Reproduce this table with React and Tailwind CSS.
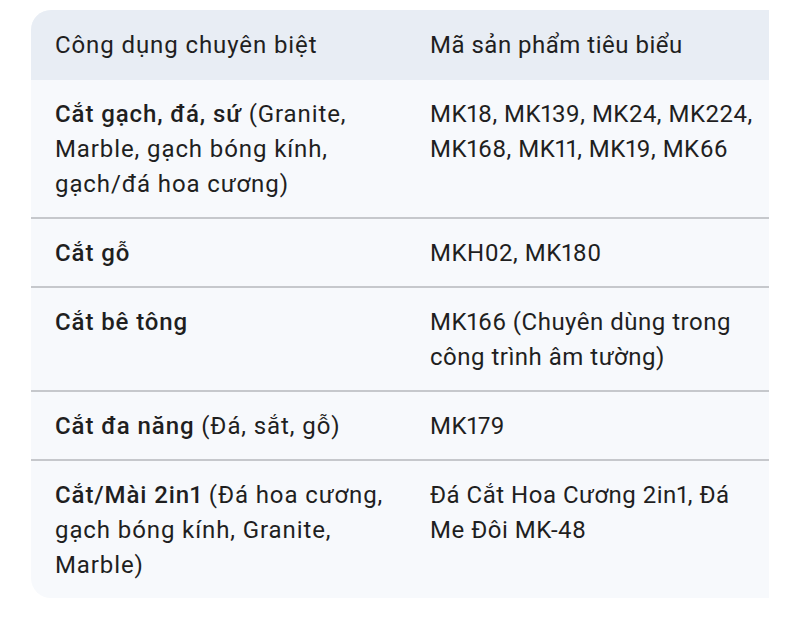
import React from "react";

const rows = [
  {
    use: (
      <>
        <span className="font-medium">Cắt gạch, đá, sứ</span> (Granite, Marble, gạch bóng kính, gạch/đá hoa cương)
      </>
    ),
    codes: "MK18, MK139, MK24, MK224, MK168, MK11, MK19, MK66",
  },
  {
    use: <span className="font-medium">Cắt gỗ</span>,
    codes: "MKH02, MK180",
  },
  {
    use: <span className="font-medium">Cắt bê tông</span>,
    codes: "MK166 (Chuyên dùng trong công trình âm tường)",
  },
  {
    use: (
      <>
        <span className="font-medium">Cắt đa năng</span> (Đá, sắt, gỗ)
      </>
    ),
    codes: "MK179",
  },
  {
    use: (
      <>
        <span className="font-medium">Cắt/Mài 2in1</span> (Đá hoa cương, gạch bóng kính, Granite, Marble)
      </>
    ),
    codes: "Đá Cắt Hoa Cương 2in1, Đá Me Đôi MK-48",
  },
];

export default function App() {
  return (
    <div className="w-[800px] h-[617px] bg-white pt-[10px] pl-[31px] font-['Roboto','Noto_Sans',sans-serif] text-[24px] leading-[35px] tracking-[0.9px] proportional-nums text-[#1f1f1f]">
      <div className="w-[738px] rounded-l-[20px] overflow-hidden bg-[#f7f9fc]">
        {/* Header */}
        <div className="grid grid-cols-[375px_1fr] bg-[#e8edf4]">
          <div className="pl-6 pr-4 pt-[18px] pb-[17px]">Công dụng chuyên biệt</div>
          <div className="pl-6 pt-[18px] pb-[17px] tracking-[0.5px]">Mã sản phẩm tiêu biểu</div>
        </div>

        {/* Rows */}
        {rows.map((row, index) => (
          <div
            key={index}
            className={`grid grid-cols-[375px_1fr] ${
              index < rows.length - 1 ? "border-b-2 border-[#c6c8cc]" : ""
            }`}
          >
            <div className="pl-6 pr-4 pt-[17px] pb-[15px]">{row.use}</div>
            <div className="pl-6 pt-[17px] pb-[15px] tracking-[0.5px]">{row.codes}</div>
          </div>
        ))}
      </div>
    </div>
  );
}
